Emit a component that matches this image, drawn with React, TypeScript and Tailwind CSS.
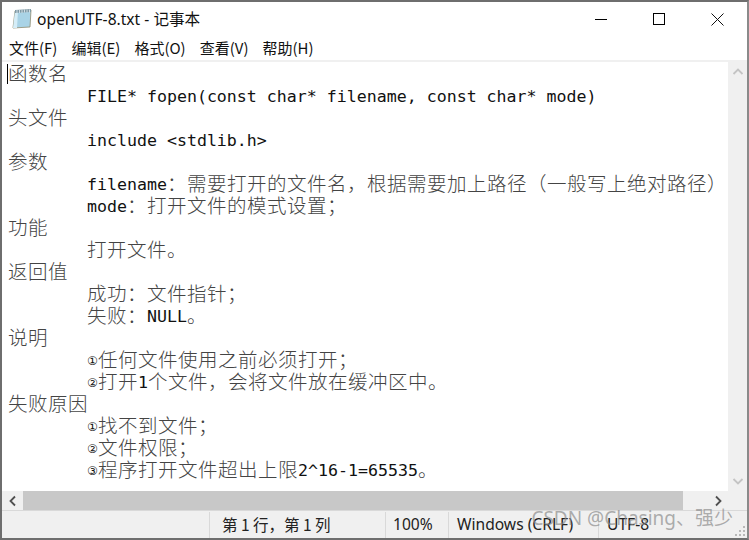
const FONT = "[font-family:'DejaVu_Sans_Mono','Noto_Sans_CJK_SC',monospace]";

const LINES: [boolean, string][] = [
  [false, "函数名"],
  [true, "FILE* fopen(const char* filename, const char* mode)"],
  [false, "头文件"],
  [true, "include <stdlib.h>"],
  [false, "参数"],
  [true, "filename\uFF1A需要打开的文件名\uFF0C根据需要加上路径\uFF08一般写上绝对路径\uFF09"],
  [true, "mode\uFF1A打开文件的模式设置\uFF1B"],
  [false, "功能"],
  [true, "打开文件。"],
  [false, "返回值"],
  [true, "成功\uFF1A文件指针\uFF1B"],
  [true, "失败\uFF1ANULL。"],
  [false, "说明"],
  [true, "①任何文件使用之前必须打开\uFF1B"],
  [true, "②打开1个文件\uFF0C会将文件放在缓冲区中。"],
  [false, "失败原因"],
  [true, "①找不到文件\uFF1B"],
  [true, "②文件权限\uFF1B"],
  [true, "③程序打开文件超出上限2^16-1=65535。"],
];

// cjk glyphs are double the latin cell in the editor font
function Text({ value }: { value: string }) {
  const parts = value.match(/[\u2460-\u2473]|[\u3000-\u9fff\uff00-\uffef]+|[^\u2460-\u2473\u3000-\u9fff\uff00-\uffef]+/g) || [];
  return (
    <>
      {parts.map((p, i) => {
        if (/^[\u2460-\u2473]/.test(p)) {
          return (
            <span key={i} className="inline-block h-[22px] w-[11px] align-top font-['DejaVu_Sans',sans-serif] text-[12px] leading-[24px] text-[#111]">
              {p}
            </span>
          );
        }
        if (/^[\u3000-\u9fff\uff00-\uffef]/.test(p)) {
          return (
            <span key={i} className="inline-block h-[22px] align-top font-['Noto_Sans_CJK_SC',sans-serif] text-[19.5px] leading-[20px] font-light tracking-[0.5px] text-[#444]">
              {p}
            </span>
          );
        }
        return (
          <span key={i} className="inline-block h-[22px] align-top leading-[24px]">
            {p}
          </span>
        );
      })}
    </>
  );
}

function NotepadIcon() {
  return (
    <svg width="20" height="22" viewBox="0 0 20 22" className="shrink-0">
      <path d="M3 3 L19 2 L18 19 L1 20 Z" fill="#a9d3e6" stroke="#8f8a6e" strokeWidth="0.8" />
      <path d="M3 3 L1 20 L5 20 L6 3 Z" fill="#d5edf7" />
      <path d="M3 2 L19 1 L19 4 L3 5 Z" fill="#7f9aa6" />
      <path d="M5 2v3M7.500 2v3M10 2v3M12.500 1.500v3M15 1.500v3M17.500 1.500v3" stroke="#e6eef2" strokeWidth="0.8" />
    </svg>
  );
}

function Chevron({ d, color }: { d: string; color: string }) {
  return (
    <svg width="12" height="12" viewBox="0 0 12 12" fill="none" stroke={color} strokeWidth="1.800">
      <path d={d} />
    </svg>
  );
}

export default function App() {
  return (
    <div className="relative flex h-[540px] w-[749px] flex-col overflow-hidden border-x-2 border-t-2 border-b-2 border-[#6e6e6e] border-r-[#8a8a8a] bg-white font-['Noto_Sans_CJK_SC','Noto_Sans',sans-serif] text-black">
      {/* title bar */}
      <div className="flex h-[34px] shrink-0 items-center">
        <div className="ml-[10px] mr-[5px]">
          <NotepadIcon />
        </div>
        <span className="pt-[2px] font-['Noto_Sans','Noto_Sans_CJK_SC',sans-serif] text-[15.600px] text-[#111]">openUTF-8.txt - 记事本</span>
        <div className="ml-auto flex items-center">
          <div className="flex w-[57px] justify-center">
            <div className="h-px w-[12px] bg-black" />
          </div>
          <div className="flex w-[60px] justify-center">
            <div className="h-[12px] w-[12px] border border-black" />
          </div>
          <div className="flex w-[58px] justify-center pr-[1px]">
            <svg width="13" height="13" viewBox="0 0 13 13" stroke="#111" strokeWidth="1" fill="none">
              <path d="M0.500 0.500 L12.500 12.500 M12.500 0.500 L0.500 12.500" />
            </svg>
          </div>
        </div>
      </div>
      {/* menu */}
      <div className="flex h-[26px] shrink-0 items-center gap-[14px] border-b-2 border-[#f0f0f0] pl-[7px] text-[15px] text-[#111]">
        <span>文件(F)</span>
        <span>编辑(E)</span>
        <span>格式(O)</span>
        <span>查看(V)</span>
        <span>帮助(H)</span>
      </div>
      {/* editor */}
      <div className="flex min-h-0 flex-1">
        <div className={`relative flex-1 overflow-hidden pt-[1px] pl-[6px] text-[16.600px] leading-[22px] whitespace-pre text-[#111] ${FONT}`}>
          <div className="absolute left-[5px] top-[2px] h-[20px] w-px bg-black" />
          {LINES.map(([indent, text], i) => (
            <div key={i} className={`h-[22px] ${indent ? "pl-[79px]" : ""}`}>
              <Text value={text} />
            </div>
          ))}
        </div>
        <div className="flex w-[19px] shrink-0 flex-col items-center justify-between bg-[#f0f0f0] py-[4px]">
          <Chevron d="M1.500 8 L6 3.500 L10.500 8" color="#c4c4c4" />
          <Chevron d="M1.500 4 L6 8.500 L10.500 4" color="#c4c4c4" />
        </div>
      </div>
      {/* horizontal scrollbar */}
      <div className="flex h-[19px] shrink-0 bg-[#f0f0f0]">
        <div className="flex w-[21px] items-center justify-center">
          <Chevron d="M8 1.500 L3.500 6 L8 10.500" color="#505050" />
        </div>
        <div className="w-[660px] bg-[#c8c8c8]" />
        <div className="flex flex-1 items-center justify-end pr-[23px]">
          <Chevron d="M4 1.500 L8.500 6 L4 10.500" color="#505050" />
        </div>
      </div>
      {/* status bar */}
      <div className="flex h-[28px] shrink-0 items-stretch border-t border-[#d9d9d9] bg-[#f0f0f0] pt-[1px] text-[15.500px] text-[#222]">
        <div className="w-[207px] shrink-0" />
        <div className="flex w-[176px] shrink-0 items-center border-l border-[#d9d9d9] pl-[12px] whitespace-pre">{"第 1 行\uFF0C第 1 列"}</div>
        <div className="flex w-[63px] shrink-0 items-center border-l border-[#d9d9d9] pl-[7px] font-['Noto_Sans',sans-serif] text-[15.600px]">100%</div>
        <div className="flex w-[150px] shrink-0 items-center border-l border-[#d9d9d9] pl-[8px] font-['Noto_Sans',sans-serif] text-[15.600px]">Windows (CRLF)</div>
        <div className="flex flex-1 items-center border-l border-[#d9d9d9] pl-[8px] font-['Noto_Sans',sans-serif] text-[15.600px]">UTF-8</div>
      </div>
      {/* watermark */}
      <div className="absolute bottom-[7px] right-[14px] font-['Noto_Sans','Noto_Sans_CJK_SC',sans-serif] text-[19px] leading-[26px] text-[#8c8c8c]/70">
        CSDN @Chasing、强少
      </div>
      <svg width="11" height="11" viewBox="0 0 11 11" fill="#b8b8b8" className="absolute bottom-[1px] right-[1px]">
        <rect x="8" y="0" width="2" height="2" />
        <rect x="4" y="4" width="2" height="2" />
        <rect x="8" y="4" width="2" height="2" />
        <rect x="0" y="8" width="2" height="2" />
        <rect x="4" y="8" width="2" height="2" />
        <rect x="8" y="8" width="2" height="2" />
      </svg>
    </div>
  );
}
